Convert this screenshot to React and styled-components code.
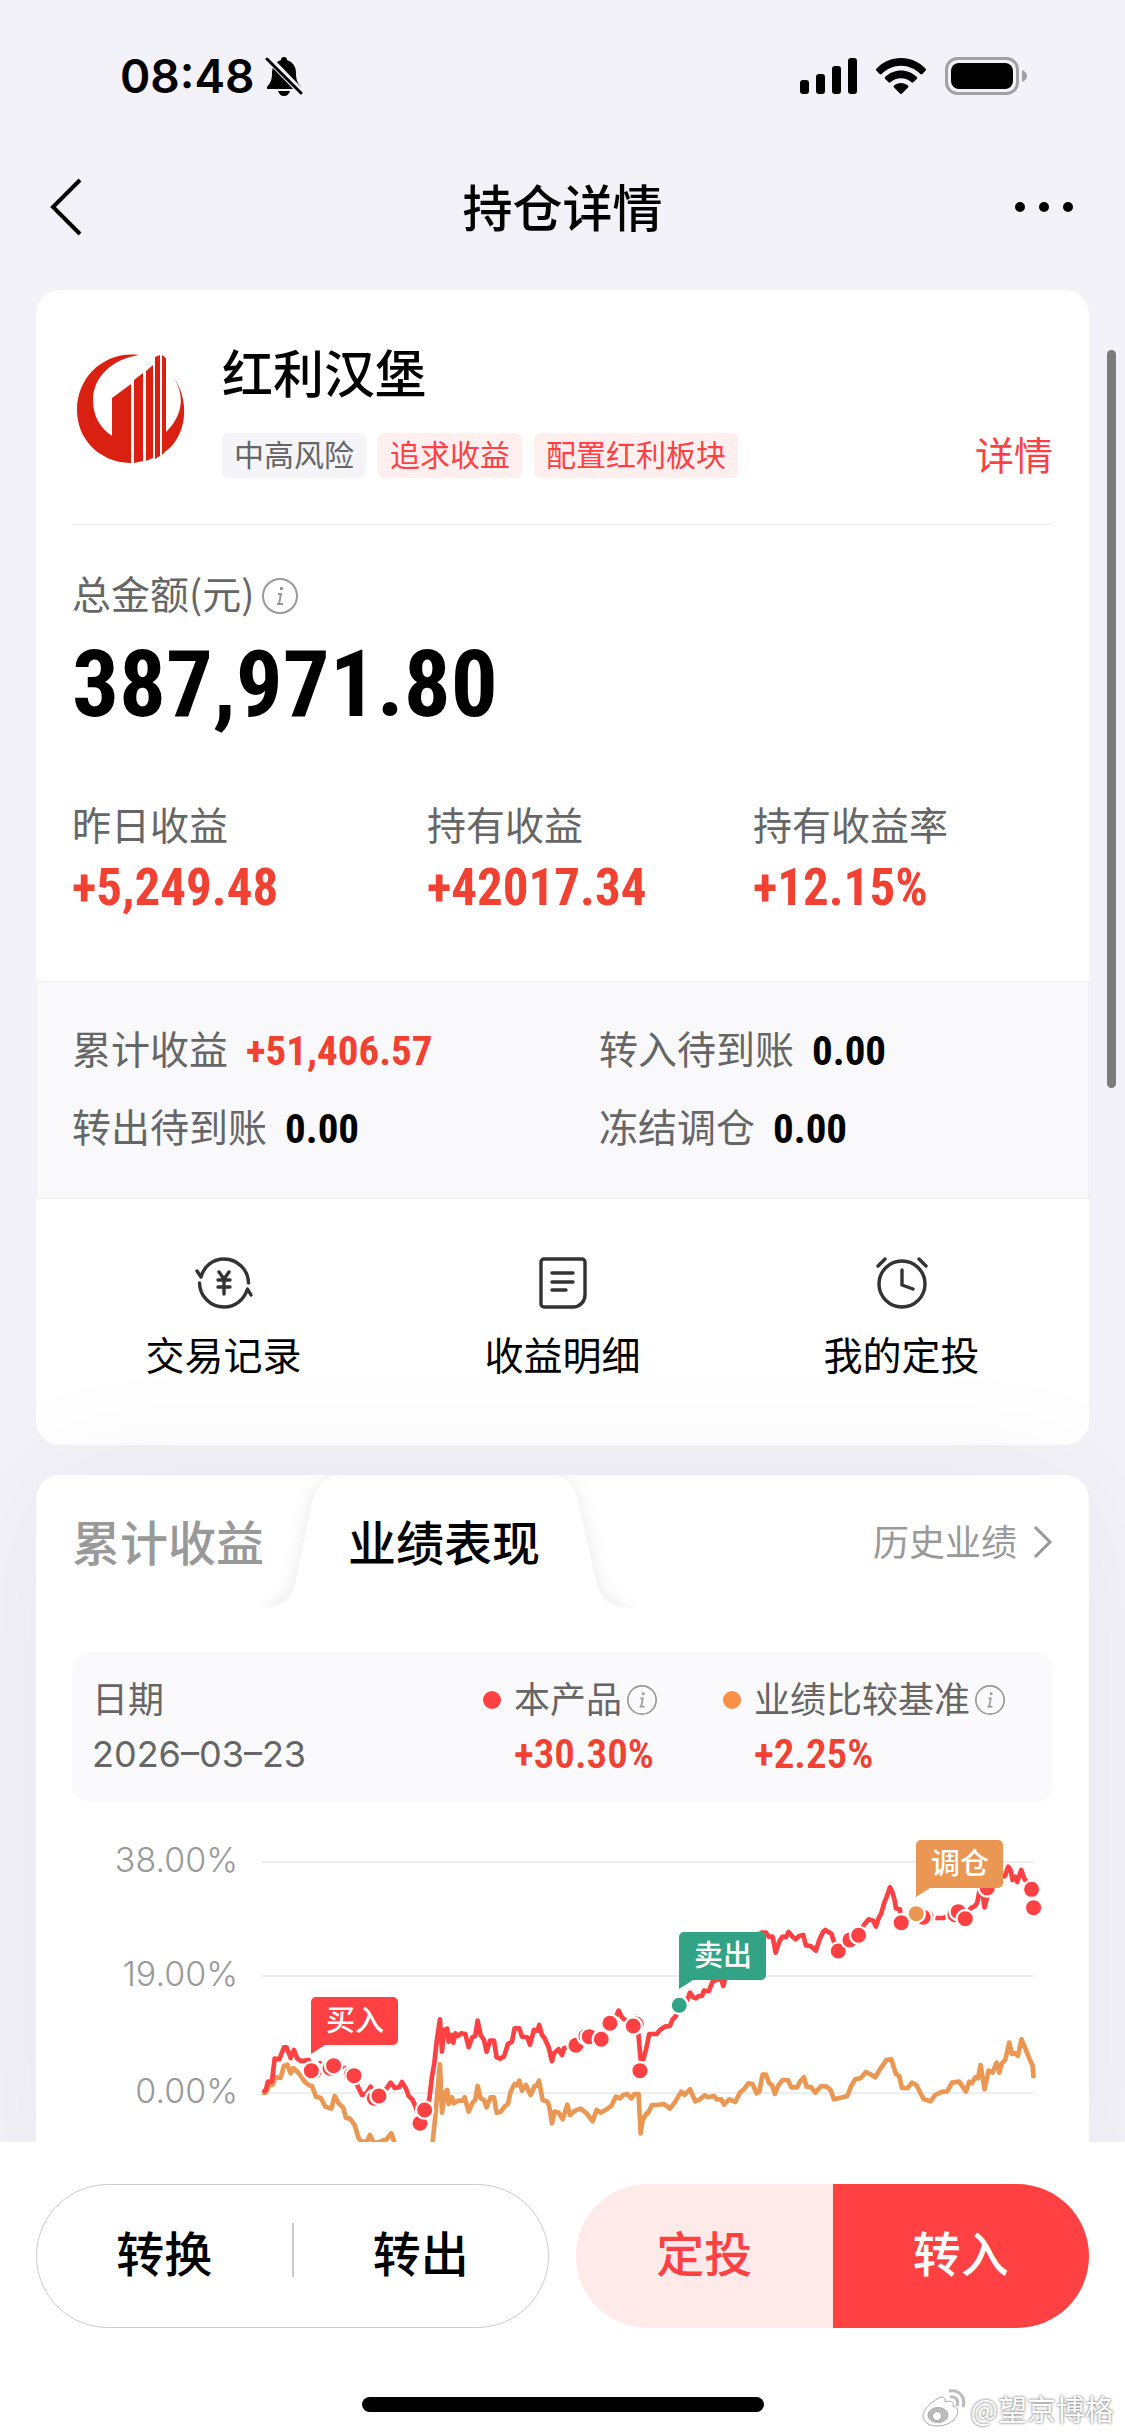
import React from "react";
import styled, { createGlobalStyle } from "styled-components";

const CJK = `"Noto Sans CJK SC", sans-serif`;
const NUM = `"Roboto Condensed", Roboto, "Noto Sans CJK SC", sans-serif`;

const Global = createGlobalStyle`
    * {
        box-sizing: border-box;
    }

    body {
        margin: 0;
        background: #f3f2f8;
        color: #000;
        font-family: ${CJK};
    }

    h1, h2, p, dl, dt, dd {
        margin: 0;
        font-weight: 400;
    }

    button {
        margin: 0;
        padding: 0;
        border: 0;
        background: none;
        color: inherit;
        font-family: inherit;
        cursor: pointer;
    }

    a {
        text-decoration: none;
    }

    svg {
        display: block;
        flex: none;
    }
`;

const Page = styled.div`
    position: relative;
    display: flex;
    flex-direction: column;
    height: 100vh;
    overflow: hidden;
`;

const StatusBar = styled.div`
    display: flex;
    align-items: center;
    justify-content: space-between;
    height: 150px;
    padding: 2px 97px 0 120px;
`;

const StatusGroup = styled.div`
    display: flex;
    align-items: center;
    gap: ${({ $gap }) => $gap}px;
`;

const Clock = styled.time`
    font: 600 46px/60px Inter, sans-serif;
`;

const NavBar = styled.header`
    display: grid;
    grid-template-columns: 1fr auto 1fr;
    align-items: center;
    height: 114px;
    margin-bottom: 26px;
    padding: 0 48px;

    & h1 {
        padding-bottom: 4px;
        font-size: 50px;
        font-weight: 500;
        line-height: 72px;
    }

    & button:last-child {
        justify-self: end;
    }
`;

const Scroller = styled.main`
    flex: 1;
    min-height: 0;
    overflow: hidden;
    padding: 0 36px;
`;

const ScrollThumb = styled.div`
    position: absolute;
    top: 350px;
    right: 9px;
    width: 9px;
    height: 738px;
    border-radius: 5px;
    background: #7c7b7e;
`;

const Card = styled.section`
    border-radius: 24px;
    background: #fff;
    margin-bottom: 30px;
`;

const ChartCard = styled(Card)`
    position: relative;
    padding: 0 36px;
    box-shadow: 0 0 140px rgba(20, 0, 20, 0.05);
`;

const ProductHead = styled.div`
    display: flex;
    align-items: center;
    margin: 0 36px;
    padding: 45px 0 46px;
    border-bottom: 1px solid #eee;
`;

const ProductInfo = styled.div`
    flex: 1;
    margin-left: 34px;

    & h2 {
        font-size: 51px;
        font-weight: 500;
        line-height: 72px;
    }
`;

const TagRow = styled.div`
    display: flex;
    gap: 12px;
    margin-top: 26px;
`;

const Tag = styled.span`
    height: 45px;
    padding: 0 12px;
    border-radius: 6px;
    font-size: 30px;
    line-height: 40px;
    color: ${({ $hot }) => ($hot ? "#ff4143" : "#666")};
    background: ${({ $hot }) => ($hot ? "#ffefef" : "#f4f4f9")};
`;

const DetailLink = styled.a`
    align-self: flex-end;
    font-size: 39px;
    line-height: 50px;
    color: #ff4143;
`;

const Total = styled.div`
    padding: 40px 36px 0;
`;

const Label = styled.span`
    display: flex;
    align-items: center;
    gap: 8px;
    font-size: 39px;
    line-height: 54px;
    color: #666;

    & svg {
        margin-top: 8px;
    }
`;

const TotalAmount = styled.p`
    margin-top: 16px;
    font-family: ${NUM};
    font-size: 93px;
    font-weight: 700;
    line-height: 100px;
`;

const ProfitGrid = styled.dl`
    display: grid;
    grid-template-columns: 355fr 326fr 300fr;
    padding: 61px 36px 66px;

    & dt {
        font-size: 39px;
        line-height: 54px;
        color: #666;
    }

    & dd {
        margin-top: 11px;
        font-family: ${NUM};
        font-size: 51px;
        font-weight: 700;
        line-height: 54px;
        color: #f14133;
    }
`;

const PendingGrid = styled.dl`
    display: grid;
    grid-template-columns: 527fr 454fr;
    padding: 26px 35px 34px;
    border: 1px solid #eeeef0;
    background: #f9f9fb;

    & > div {
        display: flex;
        align-items: center;
        gap: 18px;
        line-height: 78px;
    }

    & dt {
        font-size: 39px;
        color: #666;
    }

    & dd {
        padding-top: 8px;
        font-family: ${NUM};
        font-size: 41px;
        font-weight: 700;
        line-height: 70px;
    }
`;

const Rise = styled.dd`
    color: #f14133;
`;

const Shortcuts = styled.nav`
    display: grid;
    grid-template-columns: repeat(3, 1fr);
    padding: 54px 18px 65px;

    & button {
        display: flex;
        flex-direction: column;
        align-items: center;
        gap: 13px;
        font-size: 39px;
        line-height: 54px;
    }
`;

const TabBar = styled.div`
    position: relative;
    display: flex;
    align-items: center;
    height: 134px;
    margin-bottom: 43px;
`;

const TabShape = styled.svg`
    position: absolute;
    left: 150px;
    top: 0;
`;

const Tab = styled.button`
    position: relative;
    margin-right: 84px;
    padding-bottom: 5px;
    font-size: 48px;
    font-weight: 500;
    line-height: 72px;
    color: ${({ $active }) => ($active ? "#000" : "#999")};
`;

const HistoryLink = styled.a`
    display: flex;
    align-items: center;
    gap: 16px;
    margin-left: auto;
    font-size: 36px;
    line-height: 50px;
    color: #999;

    & span {
        padding-bottom: 5px;
    }
`;

const Legend = styled.dl`
    display: grid;
    grid-template-columns: 391fr 240fr 310fr;
    padding: 18px 20px 21px;
    border-radius: 18px;
    background: #fafafc;
    color: #666;
    font-size: 36px;
    line-height: 54px;

    & dt {
        display: flex;
        align-items: center;
        white-space: nowrap;
    }

    & dd {
        margin-top: 3px;
    }

    & svg {
        margin: 5px 0 0 5px;
    }
`;

const Dot = styled.i`
    width: 18px;
    height: 18px;
    margin: 5px 13px 0 0;
    border-radius: 50%;
    background: ${({ $color }) => $color};
`;

const LegendDate = styled.dd`
    font-family: Inter, sans-serif;
    font-size: 36px;
`;

const LegendValue = styled.dd`
    padding-left: 31px;
    font-family: ${NUM};
    font-size: 41px;
    font-weight: 600;
    color: #f14133;
`;

const ChartSvg = styled.svg`
    width: 100%;
    height: auto;

    & .axis {
        font: 300 34px Inter, sans-serif;
        fill: #999;
        text-anchor: end;
    }

    & .flag {
        font: 500 29px ${CJK};
        fill: #fff;
        text-anchor: middle;
    }
`;

const Footer = styled.footer`
    position: relative;
    display: flex;
    flex-direction: column;
    align-items: center;
    justify-content: space-between;
    height: 294px;
    padding: 42px 36px 24px;
    background: #fff;
`;

const ActionBar = styled.div`
    display: grid;
    grid-template-columns: 1fr 1fr;
    gap: 27px;
    width: 100%;
`;

const Pill = styled.div`
    display: flex;
    align-items: center;
    height: 144px;
    border-radius: 72px;
    overflow: hidden;
    border: ${({ $outlined }) => ($outlined ? "1px solid #ccc" : "0")};
`;

const Action = styled.button`
    flex: 1;
    height: 100%;
    font-size: 48px;
    font-weight: 500;
    line-height: 72px;
    padding-bottom: 10px;
    color: ${({ $color }) => $color || "#000"};
    background: ${({ $bg }) => $bg || "transparent"};
`;

const Separator = styled.span`
    width: 2px;
    height: 54px;
    margin-bottom: 12px;
    background: #ccc;
`;

const HomeBar = styled.div`
    width: 402px;
    height: 15px;
    border-radius: 8px;
    background: #000;
`;

const Watermark = styled.div`
    position: absolute;
    right: 11px;
    bottom: 9px;
    display: flex;
    align-items: center;
    gap: 5px;
    font-size: 29px;
    line-height: 36px;
    color: #fff;
    text-shadow: 0 0 3px #888, 0 0 2px #999;
`;

const BellOff = () => (
    <svg width="38" height="40" viewBox="0 0 38 40">
        <path d="M19 1c2 0 3 1 3 3 6 2 9 7 9 13 0 8 2 10 5 14v2H2v-2c3-4 5-6 5-14C7 11 10 6 16 4c0-2 1-3 3-3z" />
        <path d="M13 35h12c-1 3-3 5-6 5s-5-2-6-5z" />
        <path d="M2 1l36 37" stroke="#f3f2f8" strokeWidth="7" />
        <path d="M2 3l34 34" stroke="#000" strokeWidth="3" strokeLinecap="round" />
    </svg>
);

const Signal = () => (
    <svg width="57" height="36" viewBox="0 0 57 36">
        <rect x="0" y="22" width="9" height="14" rx="3" />
        <rect x="16" y="16" width="9" height="20" rx="3" />
        <rect x="32" y="8" width="9" height="28" rx="3" />
        <rect x="48" y="0" width="9" height="36" rx="3" />
    </svg>
);

const Wifi = () => (
    <svg width="50" height="36" viewBox="0 0 50 36">
        <path d="M25 0c9.500 0 18 4 24.500 10.500.7.700.7 1.500 0 2.200l-3.200 3.300c-.6.600-1.400.6-2 0C39 10.800 32.300 7.800 25 7.800S11 10.800 5.700 16c-.6.600-1.400.6-2 0L.5 12.700c-.7-.7-.7-1.500 0-2.200C7 4 15.500 0 25 0z" />
        <path d="M25 12.500c6 0 11.500 2.400 15.700 6.300.7.700.7 1.500 0 2.200l-3.300 3.300c-.6.600-1.400.6-2 0-2.800-2.600-6.400-4.100-10.400-4.100s-7.600 1.500-10.400 4.100c-.6.600-1.400.6-2 0L9.300 21c-.7-.7-.7-1.500 0-2.200 4.200-3.900 9.700-6.300 15.700-6.300z" />
        <path d="M25 25c2.700 0 5 1 6.900 2.500.7.600.7 1.500.1 2.100l-6 6c-.6.600-1.400.6-2 0l-6-6c-.6-.6-.6-1.500.1-2.100C20 26 22.300 25 25 25z" />
    </svg>
);

const Battery = () => (
    <svg width="83" height="38" viewBox="0 0 83 38">
        <rect x="1.500" y="1.500" width="71" height="35" rx="11" fill="none" stroke="#a0a0a5" strokeWidth="3" />
        <rect x="6" y="6" width="62" height="26" rx="8" />
        <path d="M77 13c3 1 5 3 5 6s-2 5-5 6z" fill="#a0a0a5" />
    </svg>
);

const BackIcon = () => (
    <svg width="36" height="58" viewBox="0 0 36 58">
        <path d="M32 2L5 29l27 27" fill="none" stroke="#000" strokeWidth="4" />
    </svg>
);

const MoreIcon = () => (
    <svg width="66" height="20" viewBox="0 0 66 20">
        <circle cx="9" cy="10" r="5" />
        <circle cx="33" cy="10" r="5" />
        <circle cx="57" cy="10" r="5" />
    </svg>
);

const ProductLogo = () => (
    <svg width="116" height="116" viewBox="0 0 116 116" fill="#da2010">
        <path d="M67 6C32 2 5 28 5 61c0 29 22 52 53 53h1V35L40 49v38C28 79 21 67 21 51 21 28 40 10 67 6z" />
        <path d="M62 31l9-7v88l-9 2zM74 22l7-6v93l-7 3zM83 14V8l5-2v101l-5 3zM90 6l4 3v93l-4 4zM94 83c17-17 19-36 8-54 16 23 13 57-8 73z" />
    </svg>
);

const InfoIcon = ({ size }) => (
    <svg width={size} height={size} viewBox="0 0 36 36" fill="none" stroke="#999" strokeWidth="2">
        <circle cx="18" cy="18" r="17" />
        <path d="M16 16h3l-2 10h4M15 26h3" />
        <path d="M18 9h3v3h-3z" fill="#999" stroke="none" />
    </svg>
);

const iconLine = {
    width: 60,
    height: 60,
    viewBox: "0 0 60 60",
    fill: "none",
    stroke: "#333",
    strokeWidth: 3.4,
    strokeLinecap: "round",
    strokeLinejoin: "round",
};

const RecordIcon = () => (
    <svg {...iconLine}>
        <path d="M54.500 30A24.500 24.500 0 0 0 30 6C19 6 10 13 7 24L3 18" />
        <path d="M5.500 30A24.500 24.500 0 0 0 30 54C41 54 50 47 53.500 36L57 42" />
        <path d="M25 19l5 7 5-7M24 27h12M24 34h12M30 26v15" />
    </svg>
);

const StatementIcon = () => (
    <svg {...iconLine}>
        <path d="M11 6h38a3 3 0 0 1 3 3v33a12 12 0 0 1-12 12H11a3 3 0 0 1-3-3V9a3 3 0 0 1 3-3z" />
        <path d="M19 20h21M19 29h21M19 37h14" />
    </svg>
);

const AlarmIcon = () => (
    <svg {...iconLine}>
        <circle cx="30" cy="31" r="23" />
        <path d="M30 17v15l11 4M6 13l7-7M47 6l7 7" />
    </svg>
);

const ChevronIcon = () => (
    <svg width="20" height="34" viewBox="0 0 20 34" fill="none" stroke="#999" strokeWidth="3">
        <path d="M2 2l15 15L2 32" />
    </svg>
);

const WeiboIcon = () => (
    <svg width="44" height="38" viewBox="0 0 44 38" fill="#fff" stroke="#aaa" strokeWidth="1">
        <path d="M15 10c4-3 9-3 8 3 6-2 9 0 8 4 4 1 6 4 4 9-3 7-11 11-20 11C7 37 1 33 1 27c0-6 7-13 14-17z" />
        <ellipse cx="16" cy="26" rx="10" ry="7.500" fill="#bbb" />
        <circle cx="15" cy="27" r="4.500" />
        <path d="M28 8c6-1 9 3 7 9M27 2c10-2 17 6 14 16" fill="none" stroke="#bbb" strokeWidth="3" />
    </svg>
);

const TabBackdrop = () => (
    <TabShape width="460" height="134" viewBox="0 0 460 134">
        <defs>
            <filter id="tabShadow" x="-20%" y="-20%" width="140%" height="140%">
                <feDropShadow dx="0" dy="0" stdDeviation="9" floodColor="#000" floodOpacity="0.09" />
            </filter>
            <clipPath id="tabClip">
                <path d="M38 0h376v133H38z" />
            </clipPath>
        </defs>
        <g clipPath="url(#tabClip)">
            <path
                d="M45 133C60 132 71 122 74 106L90 28C95 10 104 0 124 0V-30H330V0C344 0 352 10 356 28L374 106C378 124 388 132 406 133V170H45z"
                fill="#fff"
                filter="url(#tabShadow)"
            />
        </g>
    </TabShape>
);

// series are stored at three units per pixel, in two halves of the period
const shift = (points, dx, dy) =>
    points
        .trim()
        .split(/\s+/)
        .map((p) => {
            const [x, y] = p.split(",").map(Number);
            return `${x + dx},${y + dy}`;
        })
        .join(" ");

const FIRST = [504, 474];
const SECOND = [1704, 54];

const productLine = [
    shift(
        `70,398 78,388 84,365 96,365 104,296 118,298 132,262 140,262 152,294 162,270 172,296 184,304 194,302 206,300
        216,330 240,310 250,330 272,346 282,318 300,322 318,325 342,350 356,385 366,405 380,400 392,380 400,405 420,408
        440,385 452,368 464,384 478,382 486,366 498,386 506,408 518,420 526,438 532,455 555,450 568,418 576,350 583,310
        590,245 600,178 606,275 612,210 622,206 626,245 634,225 640,248 646,220 654,228 664,220 676,222 686,262 697,232
        706,228 713,182 722,225 732,240 740,275 750,242 762,242 770,292 780,296 792,290 804,252 816,245 824,205 838,205
        846,230 862,232 870,254 882,210 892,212 898,195 906,225 914,235 926,262 936,304 942,280 956,268 966,285 972,265
        985,262 1008,258 1048,230 1084,238 1110,190 1126,175 1136,152 1146,172 1158,182 1180,180 1190,170 1196,230
        1202,298 1210,298`,
        ...FIRST
    ),
    shift(
        `10,718 18,690 28,642 50,642 60,630 75,620 90,618 98,598 108,588 118,556 142,540 150,518 160,532 168,535 176,528
        186,528 192,512 206,514 218,485 232,478 244,478 250,498 258,465 300,420 350,350 365,338 378,338 386,350 398,350
        407,398 418,365 428,350 438,352 446,336 458,350 467,358 478,348 490,345 498,376 512,378 528,392 538,360 550,335
        556,330 575,342 580,360 595,393 630,360 656,346 672,315 686,298 700,302 708,320 716,295 724,280 733,248 740,232
        750,202 758,218 764,240 768,265 780,268 784,308 829,281 850,290 870,290 884,294 912,294 930,280 955,275 976,296
        992,265 1005,258 1012,248 1018,215 1028,225 1034,262 1042,230 1046,200 1060,190 1085,170 1095,168 1105,140
        1112,150 1118,180 1126,170 1132,186 1144,150 1154,178 1165,190 1175,208 1181,262`,
        ...SECOND
    ),
].join(" ");

const benchmarkLine = [
    shift(
        `66,398 78,398 88,376 98,374 106,352 122,354 132,318 142,314 152,340 160,325 172,335 184,350 194,365 206,375
        216,378 228,410 242,414 256,440 274,446 284,408 296,430 310,444 318,474 330,476 344,495 356,535 366,545 380,545
        390,525 402,550 420,545 440,538 454,520 464,550 500,580 560,590 578,548 586,470 592,400 600,313 606,458 614,400
        622,390 626,432 636,412 642,430 656,422 668,422 674,412 686,455 698,428 706,420 713,378 722,415 732,420 740,442
        752,412 762,412 770,458 782,456 794,440 804,432 812,395 824,372 832,376 838,362 846,392 858,375 872,405 884,378
        890,378 897,362 908,420 922,425 928,440 936,490 944,455 956,458 968,478 982,434 990,465 1006,452 1022,446
        1040,460 1058,484 1070,450 1082,458 1100,448 1114,438 1128,410 1140,415 1150,405 1162,402 1174,415 1184,402
        1196,402 1202,520 1208,480 1220,460`,
        ...FIRST
    ),
    shift(
        `24,880 36,855 50,855 72,852 90,866 104,848 124,815 134,825 150,808 166,844 180,838 194,826 204,832 222,828
        230,838 244,838 252,854 268,838 286,846 300,818 312,808 326,790 338,792 350,820 358,815 368,764 378,764 388,790
        396,795 405,822 414,798 428,780 444,780 454,802 472,802 480,785 492,772 500,800 514,802 526,818 544,798 560,800
        572,810 582,838 608,832 622,828 634,798 646,778 662,775 678,756 690,762 706,772 722,745 740,720 754,718 768,762
        778,768 786,804 804,804 816,788 830,796 842,820 852,838 872,844 886,825 908,815 922,814 936,788 958,785 978,815
        988,785 996,790 1006,772 1014,775 1022,735 1034,808 1046,752 1058,758 1070,728 1078,758 1086,730 1096,720
        1108,668 1116,702 1126,700 1134,708 1145,658 1158,690 1170,720 1178,735 1181,774`,
        ...SECOND
    ),
].join(" ");

const RED = "#ff4143";
const GREEN = "#32a385";
const ORANGE = "#eb9754";

const trades = [
    ["224,334"], ["214,332"], ["270,325"], ["281,317"], ["334,344"], ["342,347"], ["403,415"], ["417,408"],
    ["540,490"], ["554,450"], ["1008,256"], ["1038,228"], ["1048,230"], ["1084,238"], ["1110,190"], ["1189,192"],
    ["1180,198"], ["1200,332"], ["1318,136", GREEN], ["1795,-27"], ["1830,-60"], ["1856,-74"], ["1984,-112"],
    ["2058,-130"], ["2050,-128"], ["2029,-139", ORANGE], ["2145,-136"], ["2155,-145"], ["2176,-124"], ["2242,-216"],
    ["2375,-212"], ["2381,-157"],
];

const gridLines = [
    { y: 60, text: "38.00%" },
    { y: 174, text: "19.00%" },
    { y: 291, text: "0.00%" },
];

const flags = [
    { x: 239, y: 195, text: "买入", color: RED },
    { x: 607, y: 130, text: "卖出", color: GREEN },
    { x: 844, y: 38, text: "调仓", color: ORANGE },
];

const PerformanceChart = () => (
    <ChartSvg viewBox="0 0 981 420" role="img" aria-label="业绩表现">
        {gridLines.map((g) => (
            <g key={g.text}>
                <path d={`M190 ${g.y}H961`} stroke="#eee" strokeWidth="2" />
                <text className="axis" x="166" y={g.y + 10}>{g.text}</text>
            </g>
        ))}
        <g transform="scale(0.3333)" fill="none" strokeWidth="14" strokeLinejoin="round">
            <polyline points={benchmarkLine} stroke={ORANGE} />
            <polyline points={productLine} stroke={RED} />
            {trades.map(([at, color]) => {
                const [cx, cy] = shift(at, ...FIRST).split(",");
                return (
                    <circle key={at} cx={cx} cy={cy} r="26" fill={color || RED} stroke="#fff" strokeWidth="7" />
                );
            })}
        </g>
        {flags.map(({ x, y, text, color }) => (
            <g key={text} transform={`translate(${x} ${y})`}>
                <path d="M5 0h77a5 5 0 0 1 5 5v38a5 5 0 0 1-5 5H14L0 57V5a5 5 0 0 1 5-5z" fill={color} />
                <text className="flag" x="44" y="34">{text}</text>
            </g>
        ))}
    </ChartSvg>
);

const profits = [
    { name: "昨日收益", value: "+5,249.48" },
    { name: "持有收益", value: "+42017.34" },
    { name: "持有收益率", value: "+12.15%" },
];

const shortcuts = [
    { name: "交易记录", Icon: RecordIcon },
    { name: "收益明细", Icon: StatementIcon },
    { name: "我的定投", Icon: AlarmIcon },
];

const App = () => (
    <Page>
        <Global />
        <StatusBar>
            <StatusGroup $gap={10}>
                <Clock>08:48</Clock>
                <BellOff />
            </StatusGroup>
            <StatusGroup $gap={19}>
                <Signal />
                <Wifi />
                <Battery />
            </StatusGroup>
        </StatusBar>
        <NavBar>
            <button type="button" aria-label="返回"><BackIcon /></button>
            <h1>持仓详情</h1>
            <button type="button" aria-label="更多"><MoreIcon /></button>
        </NavBar>
        <Scroller>
            <Card>
                <ProductHead>
                    <ProductLogo />
                    <ProductInfo>
                        <h2>红利汉堡</h2>
                        <TagRow>
                            <Tag>中高风险</Tag>
                            <Tag $hot>追求收益</Tag>
                            <Tag $hot>配置红利板块</Tag>
                        </TagRow>
                    </ProductInfo>
                    <DetailLink href="#detail">详情</DetailLink>
                </ProductHead>
                <Total>
                    <Label>总金额(元)<InfoIcon size={36} /></Label>
                    <TotalAmount>387,971.80</TotalAmount>
                </Total>
                <ProfitGrid>
                    {profits.map((p) => (
                        <div key={p.name}>
                            <dt>{p.name}</dt>
                            <dd>{p.value}</dd>
                        </div>
                    ))}
                </ProfitGrid>
                <PendingGrid>
                    <div><dt>累计收益</dt><Rise>+51,406.57</Rise></div>
                    <div><dt>转入待到账</dt><dd>0.00</dd></div>
                    <div><dt>转出待到账</dt><dd>0.00</dd></div>
                    <div><dt>冻结调仓</dt><dd>0.00</dd></div>
                </PendingGrid>
                <Shortcuts>
                    {shortcuts.map(({ name, Icon }) => (
                        <button type="button" key={name}>
                            <Icon />
                            {name}
                        </button>
                    ))}
                </Shortcuts>
            </Card>
            <ChartCard>
                <TabBar>
                    <TabBackdrop />
                    <Tab type="button">累计收益</Tab>
                    <Tab type="button" $active>业绩表现</Tab>
                    <HistoryLink href="#history"><span>历史业绩</span><ChevronIcon /></HistoryLink>
                </TabBar>
                <Legend>
                    <div>
                        <dt>日期</dt>
                        <LegendDate>2026–03–23</LegendDate>
                    </div>
                    <div>
                        <dt><Dot $color="#ff4143" />本产品<InfoIcon size={30} /></dt>
                        <LegendValue>+30.30%</LegendValue>
                    </div>
                    <div>
                        <dt><Dot $color="#f89048" />业绩比较基准<InfoIcon size={30} /></dt>
                        <LegendValue>+2.25%</LegendValue>
                    </div>
                </Legend>
                <PerformanceChart />
            </ChartCard>
        </Scroller>
        <ScrollThumb />
        <Footer>
            <ActionBar>
                <Pill $outlined>
                    <Action type="button">转换</Action>
                    <Separator />
                    <Action type="button">转出</Action>
                </Pill>
                <Pill>
                    <Action type="button" $color="#ff4143" $bg="#fdeae9">定投</Action>
                    <Action type="button" $color="#fff" $bg="#ff4143">转入</Action>
                </Pill>
            </ActionBar>
            <HomeBar />
            <Watermark><WeiboIcon />@望京博格</Watermark>
        </Footer>
    </Page>
);

export default App;
